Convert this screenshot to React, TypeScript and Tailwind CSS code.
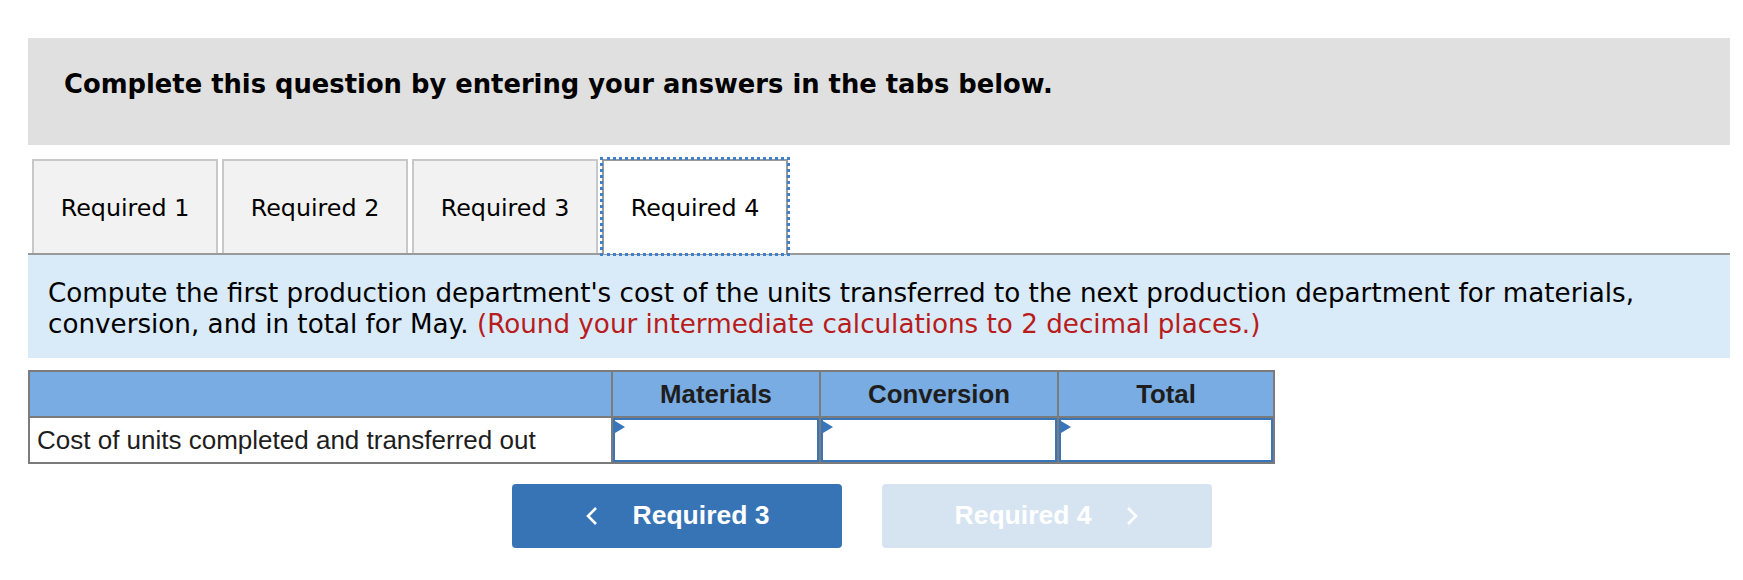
import React from "react";

const verdana = { fontFamily: '"DejaVu Sans", Verdana, sans-serif' };
const arial = { fontFamily: '"Liberation Sans", Arial, Helvetica, sans-serif' };

function Tab({ label, active }: { label: string; active?: boolean }) {
  if (active) {
    return (
      <div className="relative -mb-[2px] flex h-[95px] w-[186px] items-center justify-center border-2 border-b-0 border-[#9a9a9a] bg-white pt-[3px] text-[23.8px] text-black">
        <div className="pointer-events-none absolute -left-[4px] -right-[4px] -top-[4px] -bottom-[2px] border-[3px] border-dotted border-[#3f7fcf]" />
        {label}
      </div>
    );
  }
  return (
    <div className="flex h-[94px] w-[186px] items-center justify-center border-2 border-b-0 border-[#c8c8c8] bg-[#f2f2f2] pt-[3px] text-[23.8px] text-black">
      {label}
    </div>
  );
}

function InputCell() {
  return (
    <td className="border-2 border-[#7b7b7b] p-0">
      <div className="relative h-[44px] w-full border-2 border-[#3875b9] bg-white">
        <svg className="absolute left-0 top-[1px]" width="10" height="12" viewBox="0 0 10 12">
          <polygon points="0,0 10,6 0,12" fill="#3875b9" />
        </svg>
      </div>
    </td>
  );
}

export default function App() {
  return (
    <div className="min-h-[580px] bg-white pl-[28px] pr-[13px] pt-[38px]">
      <div className="bg-[#e0e0e0] pb-[45px] pl-[36px] pt-[31px]">
        <div className="text-[25.8px] font-bold leading-[31px] text-black" style={verdana}>
          Complete this question by entering your answers in the tabs below.
        </div>
      </div>

      <div className="mt-[14px] flex gap-[4px] border-b-2 border-[#9a9a9a] pl-[4px]" style={verdana}>
        <Tab label="Required 1" />
        <Tab label="Required 2" />
        <Tab label="Required 3" />
        <Tab label="Required 4" active />
      </div>

      <div
        className="bg-[#d9eaf8] pb-[18px] pl-[20px] pr-[20px] pt-[23px] text-[26.2px] leading-[31px] text-black"
        style={verdana}
      >
        Compute the first production department's cost of the units transferred to the next production department for materials,
        <br />
        conversion, and in total for May.{" "}
        <span className="text-[#b81c1c]">(Round your intermediate calculations to 2 decimal places.)</span>
      </div>

      <table className="mt-[12px] w-[1245px] table-fixed border-collapse border-2 border-[#7b7b7b]" style={arial}>
        <colgroup>
          <col className="w-[583px]" />
          <col className="w-[208px]" />
          <col className="w-[238px]" />
          <col className="w-[216px]" />
        </colgroup>
        <thead>
          <tr className="h-[46px] bg-[#78ace2]">
            <th className="border-2 border-[#7b7b7b]"></th>
            <th className="border-2 border-[#7b7b7b] text-center text-[25.8px] font-bold text-[#1e1e1e]">Materials</th>
            <th className="border-2 border-[#7b7b7b] text-center text-[25.8px] font-bold text-[#1e1e1e]">Conversion</th>
            <th className="border-2 border-[#7b7b7b] text-center text-[25.8px] font-bold text-[#1e1e1e]">Total</th>
          </tr>
        </thead>
        <tbody>
          <tr className="h-[46px] bg-white">
            <td className="border-2 border-[#7b7b7b] pl-[7px] text-left text-[26px] text-[#1e1e1e]">
              Cost of units completed and transferred out
            </td>
            <InputCell />
            <InputCell />
            <InputCell />
          </tr>
        </tbody>
      </table>

      <div className="mt-[20px] flex gap-[40px] pl-[484px]" style={arial}>
        <button className="flex h-[64px] w-[330px] items-center justify-center gap-[34px] rounded-[4px] bg-[#3674b6] text-[26.5px] font-bold text-white">
          <svg width="14" height="20" viewBox="0 0 14 20">
            <polyline points="11,2 3,10 11,18" fill="none" stroke="white" strokeWidth="2.6" />
          </svg>
          <span>Required 3</span>
        </button>
        <button className="flex h-[64px] w-[330px] items-center justify-center gap-[34px] rounded-[4px] bg-[#d6e4f2] text-[26.5px] font-bold text-white">
          <span>Required 4</span>
          <svg width="14" height="20" viewBox="0 0 14 20">
            <polyline points="3,2 11,10 3,18" fill="none" stroke="white" strokeWidth="2.6" />
          </svg>
        </button>
      </div>
    </div>
  );
}
